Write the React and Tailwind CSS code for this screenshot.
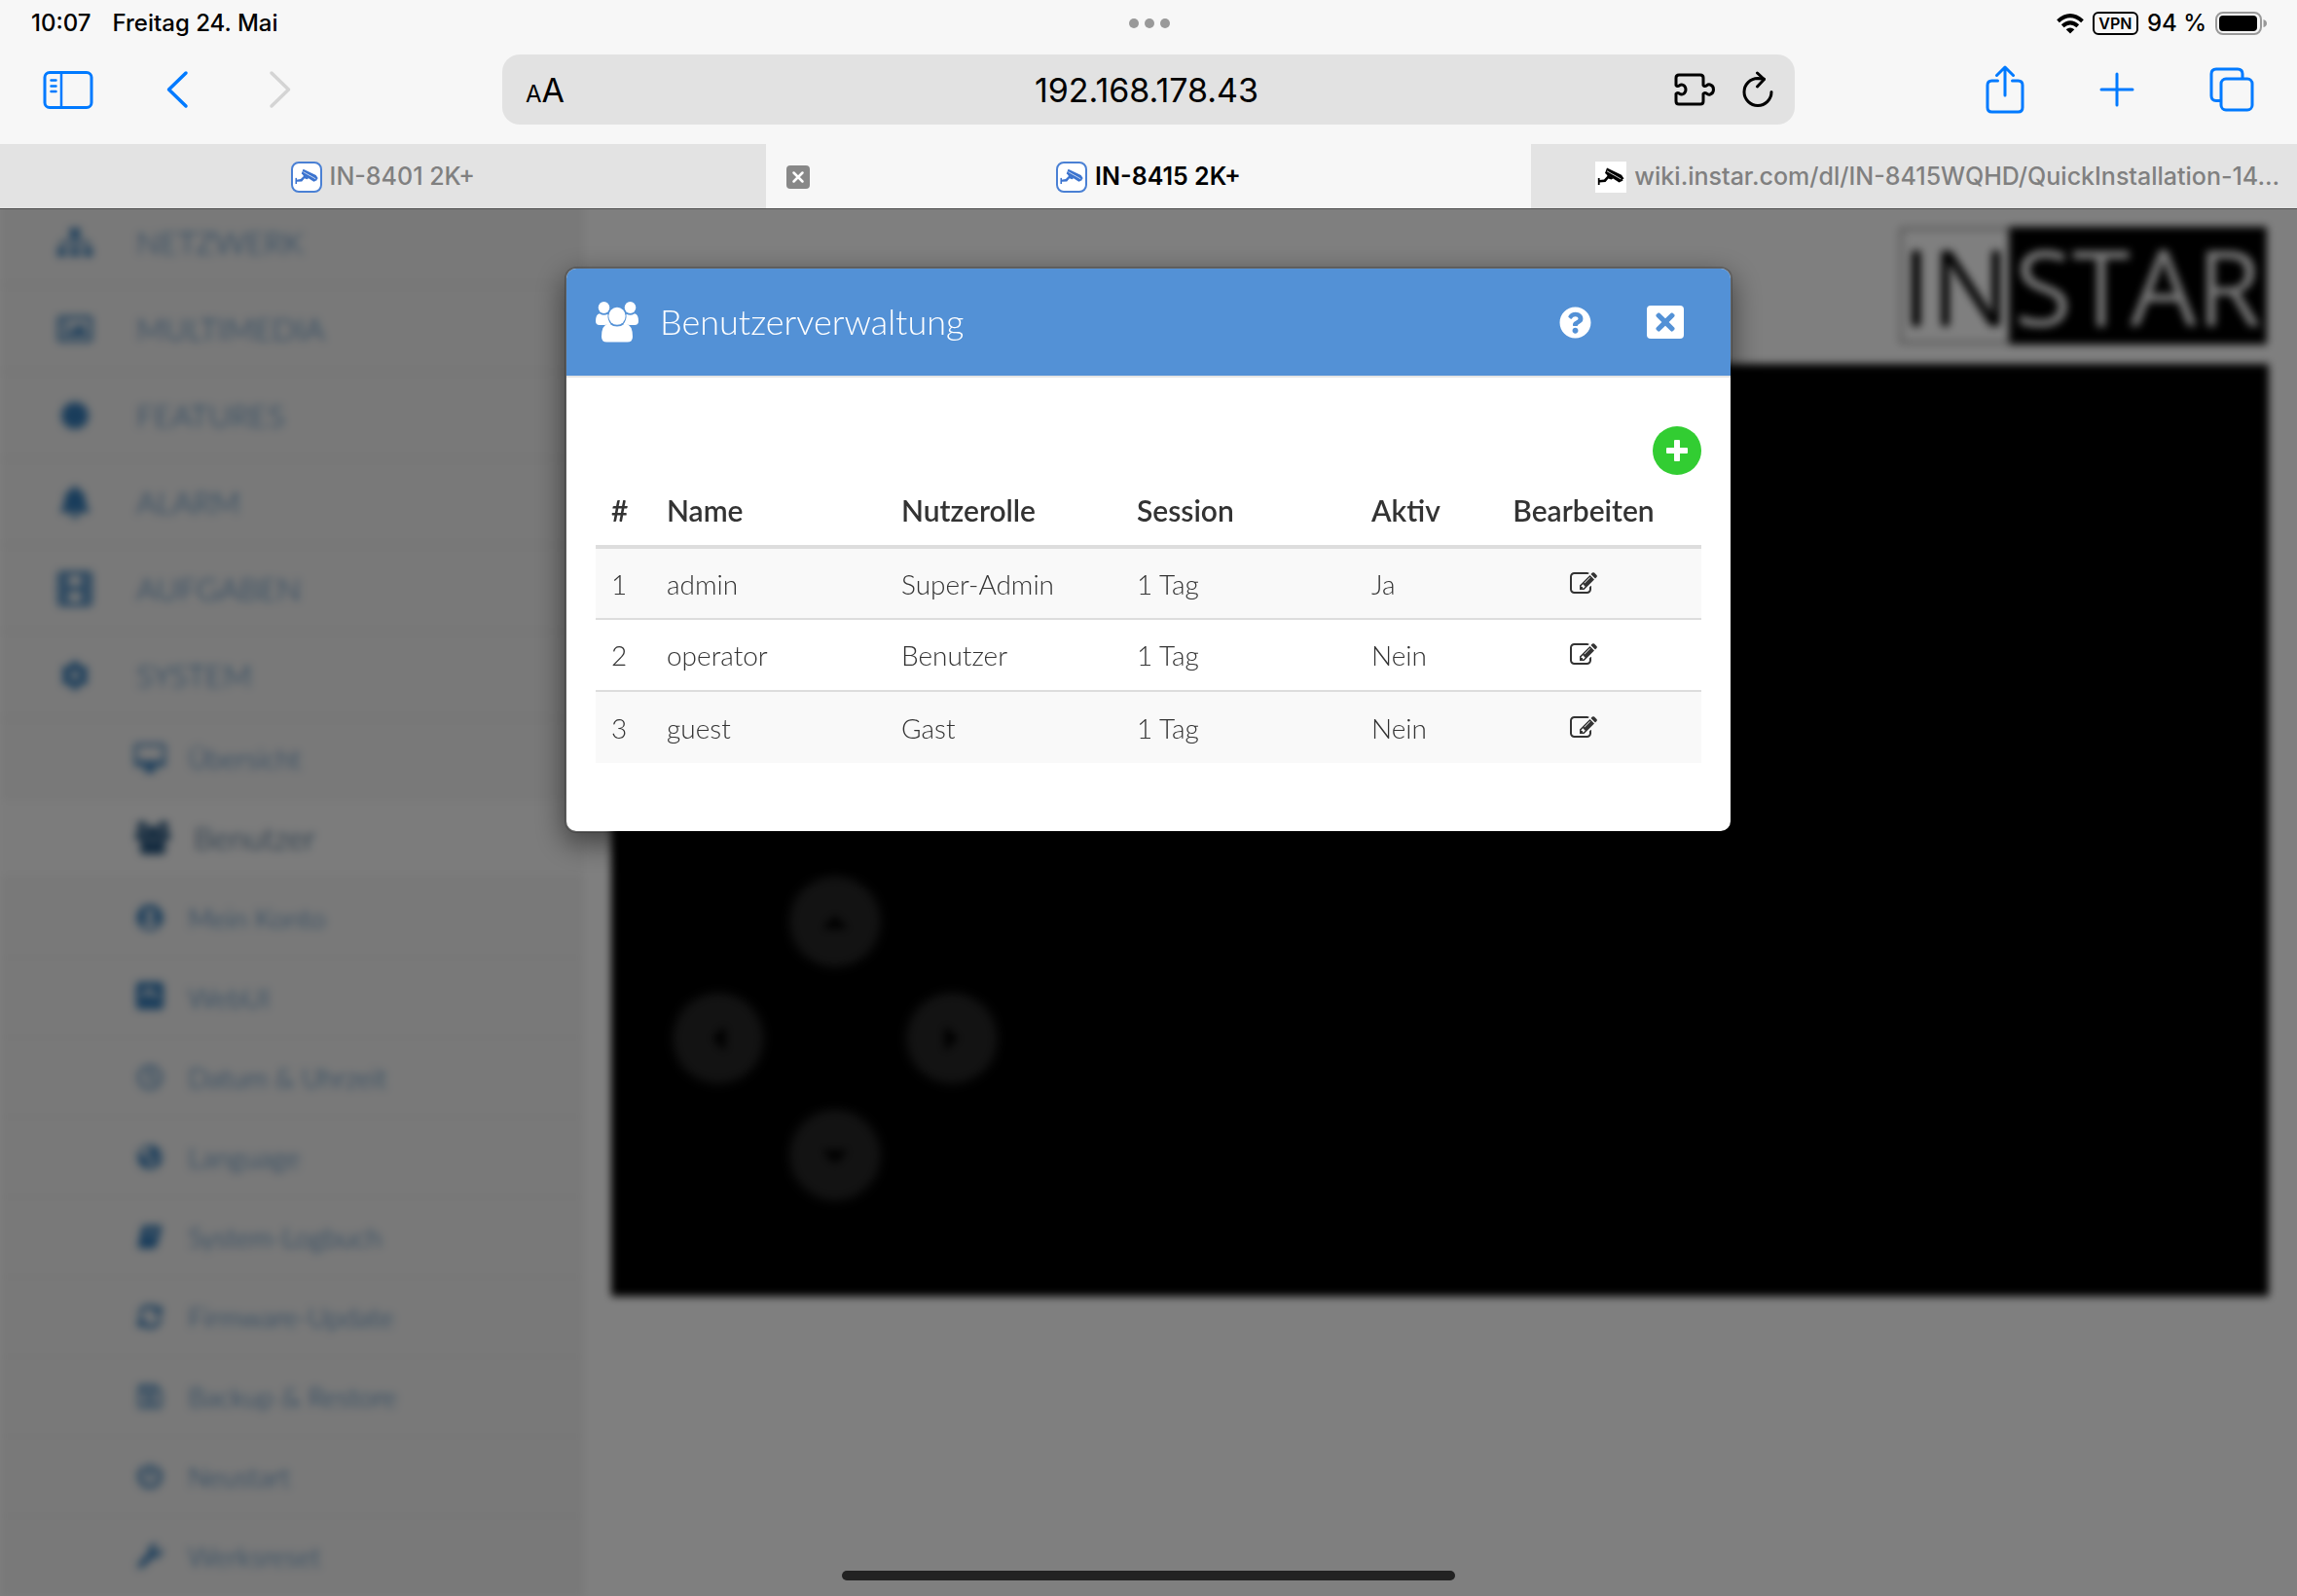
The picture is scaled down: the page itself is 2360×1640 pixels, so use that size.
import React, { useState } from "react";
import clsx from "clsx";
import {
  FaBell,
  FaCertificate,
  FaCog,
  FaGlobeAmericas,
  FaPowerOff,
  FaQuestionCircle,
  FaRegClock,
  FaRegImage,
  FaRegSave,
  FaSitemap,
  FaSyncAlt,
  FaTimes,
  FaUserCircle,
  FaWrench,
  FaCaretUp,
  FaCaretDown,
  FaCaretLeft,
  FaCaretRight,
} from "react-icons/fa";

function UsersIcon({ className }) {
  return (
    <svg viewBox="0 0 44 42" fill="currentColor" className={className} aria-hidden="true">
      <ellipse cx="8.5" cy="6" rx="5.8" ry="6" />
      <ellipse cx="35.5" cy="6" rx="5.8" ry="6" />
      <path d="M4 12.2 Q8 15 12.5 12.8 Q12 19 15.5 23 Q11.5 23.5 9 24 L4 24 Q0 24 0 20 Q0 13 4 12.2Z" />
      <path d="M40 12.2 Q36 15 31.5 12.8 Q32 19 28.5 23 Q32.5 23.5 35 24 L40 24 Q44 24 44 20 Q44 13 40 12.2Z" />
      <ellipse cx="22" cy="14.8" rx="8.7" ry="9" />
      <path d="M13.5 22.3 Q17.5 25.6 22 25.6 Q26.5 25.6 30.5 22.3 Q38 24 38 36 Q38 41.5 32.5 41.5 L11.5 41.5 Q6 41.5 6 36 Q6 24 13.5 22.3Z" />
    </svg>
  );
}

function EditIcon({ className }) {
  return (
    <svg viewBox="0 0 1792 1792" fill="currentColor" className={className} aria-hidden="true">
      <path d="M888 1184l116-116-152-152-116 116v56h96v96h56zm440-720q-16-16-33 1l-350 350q-17 17-1 33t33-1l350-350q17-17 1-33zm80 594v190q0 119-84.5 203.5t-203.5 84.5h-832q-119 0-203.5-84.5t-84.5-203.5v-832q0-119 84.5-203.5t203.5-84.5h832q63 0 117 25 15 7 18 23 3 17-9 29l-49 49q-14 14-32 8-23-6-45-6h-832q-66 0-113 47t-47 113v832q0 66 47 113t113 47h832q66 0 113-47t47-113v-126q0-13 9-22l64-64q15-15 35-7t20 29zm-96-738l288 288-672 672h-288v-288zm444 132l-92 92-288-288 92-92q28-28 68-28t68 28l152 152q28 28 28 68t-28 68z" />
    </svg>
  );
}

function CameraIcon() {
  return (
    <svg viewBox="0 0 32 32" fill="currentColor" className="size-full" aria-hidden="true">
      <path d="M12 6.5 L27 13.8 L29.5 17.5 L28 18.2 L28.5 19.5 L24.5 21.5 L10 12 Z" />
      <path d="M10.5 11.5 L18.5 17.2 L16.5 18.5 L13.5 17.5 L10.5 21 L4 21.5 L4 19 L9 18.4 L12.5 14.8 Z" />
      <path d="M2.8 17 H4.6 V24 H2.800 Z" />
      <path d="M12 9.8 L26.5 18" stroke="white" strokeWidth="0.8" />
    </svg>
  );
}

function FilmIcon({ className }) {
  return (
    <svg viewBox="0 0 36 36" fill="currentColor" fillRule="evenodd" className={className} aria-hidden="true">
      <path d="M4 0 H32 Q36 0 36 4 V32 Q36 36 32 36 H4 Q0 36 0 32 V4 Q0 0 4 0Z M11 4 V15.5 H25 V4Z M11 20.5 V32 H25 V20.5Z M3 4 V8 H7 V4Z M3 12 V16 H7 V12Z M3 20 V24 H7 V20Z M3 28 V32 H7 V28Z M29 4 V8 H33 V4Z M29 12 V16 H33 V12Z M29 20 V24 H33 V20Z M29 28 V32 H33 V28Z" />
    </svg>
  );
}

function MonitorIcon({ className }) {
  return (
    <svg viewBox="0 0 34 34" fill="currentColor" fillRule="evenodd" className={className} aria-hidden="true">
      <path d="M3 1 H31 Q34 1 34 4 V23 Q34 26 31 26 H21 Q21 29 23 31 V33 H11 V31 Q13 29 13 26 H3 Q0 26 0 23 V4 Q0 1 3 1Z M3 4 V20 H31 V4Z" />
    </svg>
  );
}

function WebUiIcon({ className }) {
  return (
    <svg viewBox="0 0 30 34" className={className} aria-hidden="true">
      <rect x="0" y="0" width="30" height="30" rx="4" fill="currentColor" />
      <path d="M8 17 Q9 8 16 9 Q17 15 24 16" fill="none" stroke="#f2f2f2" strokeWidth="4" />
    </svg>
  );
}

function BookIcon({ className }) {
  return (
    <svg viewBox="0 0 28 28" className={className} aria-hidden="true">
      <path d="M8 1 H25 Q28 1 27 4 L22 23 Q21 27 17 27 H4 Q0 27 1 22 L5 4 Q6 1 8 1Z" fill="currentColor" />
      <path d="M11 7 H21 M10 11.5 H20" stroke="#f2f2f2" strokeWidth="1.5" />
    </svg>
  );
}

const menu = [
  { label: "NETZWERK", icon: FaSitemap, size: "size-9" },
  { label: "MULTIMEDIA", icon: FaRegImage, size: "size-9" },
  { label: "FEATURES", icon: FaCertificate, size: "size-[30px]" },
  { label: "ALARM", icon: FaBell, size: "size-[34px]" },
  { label: "AUFGABEN", icon: FilmIcon, size: "size-9" },
  { label: "SYSTEM", icon: FaCog, size: "size-[30px]" },
];

const systemMenu = [
  { label: "Übersicht", icon: MonitorIcon, size: "size-8" },
  { label: "Benutzer", icon: UsersIcon, size: "size-9" },
  { label: "Mein Konto", icon: FaUserCircle, size: "size-7" },
  { label: "WebUI", icon: WebUiIcon, size: "size-8" },
  { label: "Datum & Uhrzeit", icon: FaRegClock, size: "size-[26px]" },
  { label: "Language", icon: FaGlobeAmericas, size: "size-[26px]" },
  { label: "System-Logbuch", icon: BookIcon, size: "size-[26px]" },
  { label: "Firmware-Update", icon: FaSyncAlt, size: "size-[26px]" },
  { label: "Backup & Restore", icon: FaRegSave, size: "size-7" },
  { label: "Neustart", icon: FaPowerOff, size: "size-[26px]" },
  { label: "Werksreset", icon: FaWrench, size: "size-[26px]" },
];

const users = [
  { id: 1, name: "admin", role: "Super-Admin", session: "1 Tag", active: "Ja" },
  { id: 2, name: "operator", role: "Benutzer", session: "1 Tag", active: "Nein" },
  { id: 3, name: "guest", role: "Gast", session: "1 Tag", active: "Nein" },
];

function StatusBar() {
  return (
    <div className="grid h-12 grid-cols-3 items-center pl-8 pr-[30px] text-2xl font-medium">
      <div className="flex gap-[22px]">
        <span>10:07</span>
        <span>Freitag 24. Mai</span>
      </div>
      <div className="flex justify-center gap-1.5">
        <span className="size-2.5 rounded-full bg-[#999999]" />
        <span className="size-2.5 rounded-full bg-[#999999]" />
        <span className="size-2.5 rounded-full bg-[#999999]" />
      </div>
      <div className="flex items-center justify-end gap-[9px]">
        <svg viewBox="0 0 28 21" className="h-[21px] w-7" fill="none" stroke="black" strokeWidth="4" aria-hidden="true">
          <path d="M1.5 7.8 Q14 -3.5 26.5 7.8" />
          <path d="M6.2 12.8 Q14 5.8 21.8 12.8" />
          <path d="M14 20.5 L9.7 16.2 Q14 12.6 18.3 16.2 Z" fill="black" stroke="none" />
        </svg>
        <span className="flex h-6 w-[47px] items-center justify-center rounded-md border-2 border-black text-base font-semibold">VPN</span>
        <span>94 %</span>
        <svg viewBox="0 0 54 24" className="h-6 w-[54px]" aria-hidden="true">
          <rect x="1" y="1" width="46" height="22" rx="7" fill="none" stroke="#999999" strokeWidth="2" />
          <rect x="4" y="4" width="39" height="16" rx="4" fill="black" />
          <path d="M49.5 8 Q53 9 53 12 Q53 15 49.5 16 Z" fill="#999999" />
        </svg>
      </div>
    </div>
  );
}

function Toolbar() {
  const [url, setUrl] = useState("192.168.178.43");

  return (
    <div className="grid grid-cols-[516px_1fr_516px] items-center pt-2 pb-5 text-[#007aff]">
      <div className="flex items-center pl-11">
        <button aria-label="Seitenleiste">
          <svg viewBox="0 0 52 40" className="h-10 w-[52px]" fill="none" stroke="currentColor" strokeWidth="3" strokeLinecap="round">
            <rect x="2" y="2.5" width="48" height="36" rx="5" />
            <path d="M19 2.5 V38.5" strokeWidth="2.5" />
            <path d="M8.5 10.5 H13.5 M8.5 16.5 H13.5 M8.5 22 H13.5" strokeWidth="2.5" />
          </svg>
        </button>
        <button aria-label="Zurück" className="ml-[75px]">
          <svg viewBox="0 0 24 40" className="h-10 w-6" fill="none" stroke="currentColor" strokeWidth="3.5" strokeLinecap="round" strokeLinejoin="round">
            <path d="M20 3 L2.5 20 L20 37" />
          </svg>
        </button>
        <button aria-label="Vorwärts" disabled className="ml-20 text-[#d4d4d4]">
          <svg viewBox="0 0 24 40" className="h-10 w-6" fill="none" stroke="currentColor" strokeWidth="3.5" strokeLinecap="round" strokeLinejoin="round">
            <path d="M4 3 L21.5 20 L4 37" />
          </svg>
        </button>
      </div>

      <div className="flex h-18 items-center rounded-[18px] bg-[#e2e2e2] pl-6 pr-[22px] text-black">
        <button aria-label="Textgröße" className="flex w-24 items-baseline">
          <span className="text-2xl">A</span>
          <span className="text-[34px]">A</span>
        </button>
        <input
          aria-label="Adresse"
          value={url}
          onChange={(e) => setUrl(e.target.value)}
          className="min-w-0 flex-1 bg-transparent text-center text-[34px] outline-none"
        />
        <div className="flex w-[102px] items-center justify-between">
          <button aria-label="Erweiterungen">
            <svg viewBox="0 0 42 34" className="h-[34px] w-[42px]" fill="none" stroke="currentColor" strokeWidth="3" strokeLinejoin="round">
              <path d="M2 12.5 V5 Q2 2 5 2 H27 Q30 2 30 5 V12.5 Q31.5 14.5 33.5 12.8 Q35 11.5 37 12 Q40.5 13 40.5 17 Q40.5 21 37 22 Q35 22.5 33.5 21.2 Q31.5 19.5 30 21.5 V29 Q30 32 27 32 H5 Q2 32 2 29 V21.5 Q3.5 19.5 5.5 21.2 Q7.5 22.5 9.5 21.5 Q12 20 12 17 Q12 14 9.5 12.5 Q7.5 11.5 5.5 12.8 Q3.5 14.5 2 12.5 Z" />
            </svg>
          </button>
          <button aria-label="Neu laden">
            <svg viewBox="0 0 32 38" className="h-[38px] w-8" fill="none" stroke="currentColor" strokeWidth="3" strokeLinecap="round" strokeLinejoin="round">
              <path d="M30 21.5 A14 14 0 1 1 16 7.5 L22.5 8.2" />
              <path d="M15.5 2 L22.5 8.5 L15.5 16" />
            </svg>
          </button>
        </div>
      </div>

      <div className="flex items-center justify-between pl-[196px] pr-11">
        <button aria-label="Teilen">
          <svg viewBox="0 0 40 50" className="h-[50px] w-10" fill="none" stroke="currentColor" strokeWidth="3" strokeLinecap="round" strokeLinejoin="round">
            <path d="M12.5 16 H6.5 Q2 16 2 20.5 V43.5 Q2 48 6.5 48 H33.5 Q38 48 38 43.5 V20.5 Q38 16 33.5 16 H27.5" />
            <path d="M20 31 V2.5 M11.5 10.5 L20 2 L28.5 10.5" />
          </svg>
        </button>
        <button aria-label="Neuer Tab">
          <svg viewBox="0 0 36 36" className="size-9" fill="none" stroke="currentColor" strokeWidth="3" strokeLinecap="round">
            <path d="M18 2 V34 M2 18 H34" />
          </svg>
        </button>
        <button aria-label="Tabübersicht">
          <svg viewBox="0 0 46 46" className="size-[46px]" fill="none" stroke="currentColor" strokeWidth="3" strokeLinejoin="round">
            <rect x="12" y="12" width="32" height="32" rx="5" />
            <path d="M12 34.5 H7 Q2 34.5 2 29.5 V7 Q2 2 7 2 H29 Q34 2 34 7 V12" />
          </svg>
        </button>
      </div>
    </div>
  );
}

function BrowserTabs() {
  return (
    <div className="grid h-[66px] grid-cols-3 text-[25px] font-medium text-[#808080]">
      <a href="#tab-1" className="flex items-center justify-center gap-2 bg-[#e3e3e3] pt-0.5">
        <span className="size-8 rounded-lg border-2 border-[#4a80d4] bg-white text-[#3b73cf]">
          <CameraIcon />
        </span>
        IN-8401 2K+
      </a>
      <div className="grid grid-cols-[44px_1fr_44px] items-center pt-0.5">
        <button aria-label="Tab schließen" className="ml-[21px] flex size-6 items-center justify-center rounded-sm bg-[#888888] text-white">
          <svg viewBox="0 0 24 24" className="size-6" stroke="currentColor" strokeWidth="2.5" strokeLinecap="round">
            <path d="M7.5 7.5 L16.5 16.5 M16.5 7.5 L7.5 16.5" />
          </svg>
        </button>
        <a href="#tab-2" className="flex items-center justify-center gap-2 font-semibold text-black">
          <span className="size-8 rounded-lg border-2 border-[#4a80d4] bg-white text-[#3b73cf]">
            <CameraIcon />
          </span>
          IN-8415 2K+
        </a>
      </div>
      <a href="#tab-3" className="flex items-center gap-2 overflow-hidden bg-[#e3e3e3] pt-0.5 pl-[66px] whitespace-nowrap">
        <span className="size-8 shrink-0 bg-white text-black">
          <CameraIcon />
        </span>
        wiki.instar.com/dl/IN-8415WQHD/QuickInstallation-14...
      </a>
    </div>
  );
}

function Sidebar() {
  return (
    <nav className="-mt-2.5 w-[600px] shrink-0 bg-[#f2f2f2] font-light text-[#337ab7]">
      {menu.map(({ label, icon: Icon, size }) => (
        <a key={label} href={"#" + label} className="flex h-[89px] items-center border-b-2 border-[#e7e7e7] pl-[59px] text-[32px]">
          <span className="mr-[45px] flex w-9 justify-center">
            <Icon className={size} />
          </span>
          {label}
        </a>
      ))}
      {systemMenu.map(({ label, icon: Icon, size }) => (
        <a
          key={label}
          href={"#" + label}
          className={clsx(
            "flex h-[82px] items-center border-b-2 border-[#eeeeee] pl-[139px]",
            label === "Benutzer" ? "bg-[#f8f8f8] text-[32px] text-[#23527c]" : "text-[28px]"
          )}
        >
          <span className={clsx("mr-6 flex justify-center", label === "Benutzer" ? "w-9" : "w-[30px]")}>
            <Icon className={clsx("shrink-0", size)} />
          </span>
          {label}
        </a>
      ))}
    </nav>
  );
}

function LiveView() {
  const padButton = "flex size-[90px] items-center justify-center rounded-full bg-[#262626] text-[40px] text-black shadow-[0_0_12px_#262626]";

  return (
    <section className="min-w-0 flex-1 pr-[29px] pl-7">
      <div className="flex justify-end pt-[18px] pr-0.5 pb-5">
        <div className="flex h-[121px] items-center border-4 border-[#bbbbbb] font-['Open_Sans',sans-serif] text-[108px] leading-none font-normal text-black">
          <span className="flex h-[121px] w-[109px] items-center justify-center">IN</span>
          <span className="-mr-1 flex h-[121px] w-[265px] items-center justify-center bg-black text-[#f2f2f2]">STAR</span>
        </div>
      </div>
      <div className="relative aspect-video bg-black">
        <div className="absolute bottom-[100px] left-[65px] grid grid-cols-3 gap-[30px]">
          <button aria-label="Hoch" className={clsx(padButton, "col-start-2")}><FaCaretUp /></button>
          <button aria-label="Links" className={clsx(padButton, "col-start-1 row-start-2")}><FaCaretLeft /></button>
          <button aria-label="Rechts" className={clsx(padButton, "col-start-3 row-start-2")}><FaCaretRight /></button>
          <button aria-label="Runter" className={clsx(padButton, "col-start-2 row-start-3")}><FaCaretDown /></button>
        </div>
      </div>
    </section>
  );
}

function UserModal() {
  return (
    <div role="dialog" aria-label="Benutzerverwaltung" className="w-[1200px] overflow-hidden rounded-xl border-2 border-black/20 bg-white bg-clip-padding text-[#333333] shadow-[0_10px_30px_rgba(0,0,0,0.5)]">
      <div className="flex h-28 items-center border-b-2 border-[#e5e5e5] bg-[#5391d6] pr-12 pl-[30px] text-white">
        <UsersIcon className="h-[42px] w-11" />
        <h2 className="ml-[22px] flex-1 pb-0.5 text-4xl font-light">Benutzerverwaltung</h2>
        <button aria-label="Hilfe" className="mr-[57px] text-[33px]">
          <FaQuestionCircle />
        </button>
        <button aria-label="Schließen" className="flex h-[34px] w-[38px] items-center justify-center rounded-sm bg-white text-[28px] text-[#5391d6]">
          <FaTimes />
        </button>
      </div>

      <div className="px-[30px] pt-[50px] pb-[70px]">
        <div className="flex justify-end">
          <button aria-label="Benutzer hinzufügen" className="flex size-[50px] items-center justify-center rounded-full bg-[#32cd32] text-white">
            <svg viewBox="0 0 22 22" className="size-[22px]" fill="currentColor" aria-hidden="true">
              <rect x="8" y="0" width="6" height="22" rx="1" />
              <rect x="0" y="8" width="22" height="6" rx="1" />
            </svg>
          </button>
        </div>
        <table className="w-full table-fixed text-left text-[28px]">
          <thead className="text-[30px]">
            <tr className="h-[74px] border-b-4 border-[#dddddd]">
              <th className="w-[57px] pl-4 font-semibold">#</th>
              <th className="w-[241px] pl-4 font-semibold">Name</th>
              <th className="w-[242px] pl-4 font-semibold">Nutzerolle</th>
              <th className="w-[241px] pl-4 font-semibold">Session</th>
              <th className="pl-4 font-semibold">Aktiv</th>
              <th className="w-[212px] pr-[46px] pl-4 text-center font-semibold">Bearbeiten</th>
            </tr>
          </thead>
          <tbody className="font-light">
            {users.map((user) => (
              <tr key={user.id} className="h-[74px] border-t-2 border-[#dddddd] odd:bg-[#f9f9f9]">
                <td className="pl-4">{user.id}</td>
                <td className="pl-4">{user.name}</td>
                <td className="pl-4">{user.role}</td>
                <td className="pl-4">{user.session}</td>
                <td className="pl-4">{user.active}</td>
                <td className="pr-[46px] pl-4">
                  <button aria-label={user.name + " bearbeiten"} className="mx-auto block">
                    <EditIcon className="size-7" />
                  </button>
                </td>
              </tr>
            ))}
          </tbody>
        </table>
      </div>
    </div>
  );
}

export default function App() {
  return (
    <div className="flex h-screen flex-col overflow-hidden bg-white font-['Lato',sans-serif]">
      <header className="relative z-10 border-b border-[#505050] bg-[#f7f7f7] font-['Inter',sans-serif] text-black">
        <StatusBar />
        <Toolbar />
        <BrowserTabs />
      </header>

      <main className="relative min-h-0 flex-1 overflow-hidden">
        <div className="flex blur-[4px]">
          <Sidebar />
          <LiveView />
        </div>

        <div className="absolute inset-0 flex items-start justify-center bg-black/50 pt-[59px]">
          <UserModal />
        </div>

        <div className="absolute inset-x-0 bottom-4 flex justify-center">
          <div className="h-2.5 w-[630px] rounded-full bg-[#222222]" />
        </div>
      </main>
    </div>
  );
}
